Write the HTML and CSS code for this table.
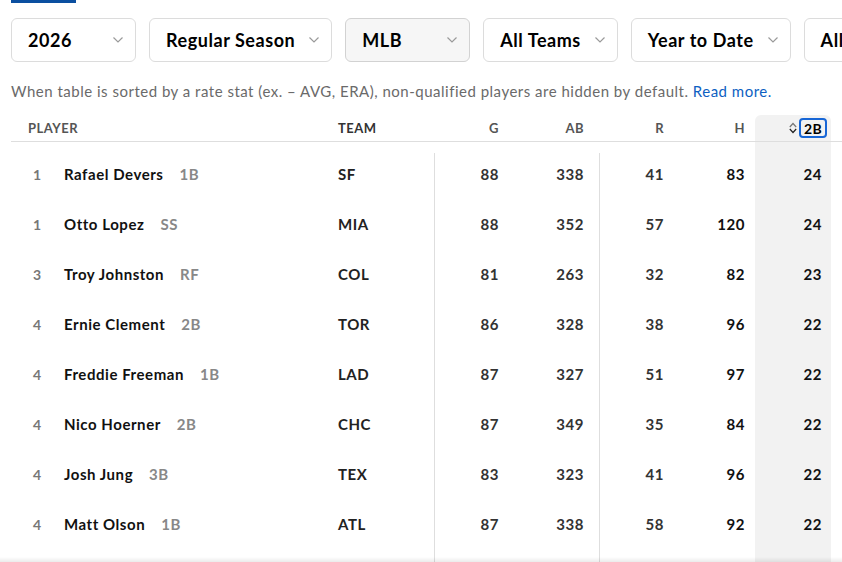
FILE: index.html
```html
<!DOCTYPE html>
<html lang="en">
<head>
<meta charset="utf-8">
<title>MLB Stats</title>
<link rel="stylesheet" href="styles.css">
</head>
<body>
<div class="page">
  <div class="tab-bar"></div>
  <div class="filters">
    <div class="filter"><span>2026</span><svg class="chev" viewBox="0 0 10 6"><path d="M0.5 0.5 L5 5 L9.5 0.5"/></svg></div>
    <div class="filter"><span>Regular Season</span><svg class="chev" viewBox="0 0 10 6"><path d="M0.5 0.5 L5 5 L9.5 0.5"/></svg></div>
    <div class="filter active"><span>MLB</span><svg class="chev" viewBox="0 0 10 6"><path d="M0.5 0.5 L5 5 L9.5 0.5"/></svg></div>
    <div class="filter"><span>All Teams</span><svg class="chev" viewBox="0 0 10 6"><path d="M0.5 0.5 L5 5 L9.5 0.5"/></svg></div>
    <div class="filter"><span>Year to Date</span><svg class="chev" viewBox="0 0 10 6"><path d="M0.5 0.5 L5 5 L9.5 0.5"/></svg></div>
    <div class="filter"><span>All Positions</span><svg class="chev" viewBox="0 0 10 6"><path d="M0.5 0.5 L5 5 L9.5 0.5"/></svg></div>
  </div>
  <p class="note">When table is sorted by a rate stat (ex. – AVG, ERA), non-qualified players are hidden by default. <a href="#">Read more.</a></p>

  <div class="table">
    <div class="thead">
      <div class="th c-player">Player</div>
      <div class="th c-team">Team</div>
      <div class="th c-g num">G</div>
      <div class="th c-ab num">AB</div>
      <div class="th c-r num">R</div>
      <div class="th c-h num">H</div>
      <div class="th c-2b num sorted">
        <svg class="sort" viewBox="0 0 8 14"><path class="up" d="M0.8 6 L4 2.5 L7.2 6"/><path class="down" d="M0.8 8 L4 11.5 L7.2 8"/></svg>
        <span class="focus">2B</span>
      </div>
      <div class="th c-rest"></div>
    </div>
    <div class="spacer">
      <div class="c-player"></div><div class="c-team"></div><div class="c-g"></div><div class="c-ab"></div><div class="c-r"></div><div class="c-h"></div><div class="c-2b"></div><div class="c-rest"></div>
    </div>

    <div class="row first">
      <div class="c-player"><span class="rank">1</span><span class="name">Rafael Devers</span><span class="pos">1B</span></div>
      <div class="c-team">SF</div>
      <div class="c-g num sep">88</div><div class="c-ab num">338</div><div class="c-r num sep">41</div><div class="c-h num dark">83</div><div class="c-2b num dark">24</div><div class="c-rest"></div>
    </div>
    <div class="row">
      <div class="c-player"><span class="rank">1</span><span class="name">Otto Lopez</span><span class="pos">SS</span></div>
      <div class="c-team">MIA</div>
      <div class="c-g num sep">88</div><div class="c-ab num">352</div><div class="c-r num sep">57</div><div class="c-h num dark">120</div><div class="c-2b num dark">24</div><div class="c-rest"></div>
    </div>
    <div class="row">
      <div class="c-player"><span class="rank">3</span><span class="name">Troy Johnston</span><span class="pos">RF</span></div>
      <div class="c-team">COL</div>
      <div class="c-g num sep">81</div><div class="c-ab num">263</div><div class="c-r num sep">32</div><div class="c-h num dark">82</div><div class="c-2b num dark">23</div><div class="c-rest"></div>
    </div>
    <div class="row">
      <div class="c-player"><span class="rank">4</span><span class="name">Ernie Clement</span><span class="pos">2B</span></div>
      <div class="c-team">TOR</div>
      <div class="c-g num sep">86</div><div class="c-ab num">328</div><div class="c-r num sep">38</div><div class="c-h num dark">96</div><div class="c-2b num dark">22</div><div class="c-rest"></div>
    </div>
    <div class="row">
      <div class="c-player"><span class="rank">4</span><span class="name">Freddie Freeman</span><span class="pos">1B</span></div>
      <div class="c-team">LAD</div>
      <div class="c-g num sep">87</div><div class="c-ab num">327</div><div class="c-r num sep">51</div><div class="c-h num dark">97</div><div class="c-2b num dark">22</div><div class="c-rest"></div>
    </div>
    <div class="row">
      <div class="c-player"><span class="rank">4</span><span class="name">Nico Hoerner</span><span class="pos">2B</span></div>
      <div class="c-team">CHC</div>
      <div class="c-g num sep">87</div><div class="c-ab num">349</div><div class="c-r num sep">35</div><div class="c-h num dark">84</div><div class="c-2b num dark">22</div><div class="c-rest"></div>
    </div>
    <div class="row">
      <div class="c-player"><span class="rank">4</span><span class="name">Josh Jung</span><span class="pos">3B</span></div>
      <div class="c-team">TEX</div>
      <div class="c-g num sep">83</div><div class="c-ab num">323</div><div class="c-r num sep">41</div><div class="c-h num dark">96</div><div class="c-2b num dark">22</div><div class="c-rest"></div>
    </div>
    <div class="row">
      <div class="c-player"><span class="rank">4</span><span class="name">Matt Olson</span><span class="pos">1B</span></div>
      <div class="c-team">ATL</div>
      <div class="c-g num sep">87</div><div class="c-ab num">338</div><div class="c-r num sep">58</div><div class="c-h num dark">92</div><div class="c-2b num dark">22</div><div class="c-rest"></div>
    </div>
    <div class="row filler">
      <div class="c-player"></div><div class="c-team"></div><div class="c-g sep"></div><div class="c-ab"></div><div class="c-r sep"></div><div class="c-h"></div><div class="c-2b"></div><div class="c-rest"></div>
    </div>
  </div>
</div>
<div class="bottom-shade"></div>
</body>
</html>
```

FILE: styles.css
```css
html, body {
  margin: 0;
  padding: 0;
  overflow: hidden;
  background: #fff;
}
body {
  font-family: "Lato", "Liberation Sans", sans-serif;
  color: #111;
  width: 842px;
  height: 562px;
}
.page {
  padding-left: 11px;
}
.tab-bar {
  width: 65px;
  height: 3px;
  background: #0b4fa0;
}
.filters {
  display: flex;
  gap: 13px;
  margin-top: 15px;
  white-space: nowrap;
}
.filter {
  flex: none;
  box-sizing: border-box;
  height: 44px;
  min-width: 125px;
  display: flex;
  align-items: center;
  justify-content: space-between;
  padding: 0 12px 0 16px;
  border: 1px solid #dcdcdc;
  border-radius: 6px;
  background: #fff;
  font-size: 18px;
  font-weight: 700;
  letter-spacing: 0.55px;
  color: #000;
}
.filter.active {
  background: #f6f6f6;
  border-color: #d2d2d2;
}
.chev {
  width: 10px;
  height: 6px;
  margin-left: 14px;
  fill: none;
  stroke: #9a9a9a;
  stroke-width: 1.2;
}
.note {
  margin: 19px 0 0;
  font-size: 15px;
  line-height: 20px;
  letter-spacing: 0.5px;
  color: #6a6a6a;
}
.note a {
  color: #0d5fc2;
  text-decoration: none;
}
.table {
  margin-top: 14px;
}
.thead, .row, .spacer {
  display: grid;
  grid-template-columns: 311px 112px 81px 84px 81px 75px 76px 1fr;
}
.thead {
  height: 26px;
  border-bottom: 1px solid #dedede;
  align-items: stretch;
}
.th {
  display: flex;
  align-items: center;
  font-size: 13px;
  font-weight: 700;
  letter-spacing: 0.5px;
  text-transform: uppercase;
  color: #555;
}
.th.c-player { padding-left: 17px; }
.th.num { justify-content: flex-end; }
.spacer { height: 7px; }
.row {
  height: 50px;
  align-items: stretch;
  font-size: 15px;
  font-weight: 700;
  letter-spacing: 0.55px;
}
.row > div {
  display: flex;
  align-items: center;
}
.row .num { justify-content: flex-end; color: #333; }
.row .num.dark { color: #111; }
.c-team { padding-left: 16px; color: #333; }
.row .c-team { color: #222; }
.c-g { padding-right: 16px; }
.c-ab { padding-right: 15px; }
.c-r { padding-right: 16px; }
.c-h { padding-right: 10px; }
.c-2b { padding-right: 9px; background: #f2f2f2; }
.th.c-2b {
  border-radius: 6px 6px 0 0;
  padding-right: 4px;
  color: #000;
}
.sep {
  border-left: 1px solid #dedede;
}
.row.first .sep {
  border-left: 1px solid transparent;
  background: linear-gradient(#dedede, #dedede) no-repeat;
  background-origin: border-box;
  background-clip: border-box;
  background-position: 0 4px;
  background-size: 1px 100%;
}
.rank {
  width: 31px;
  margin-left: 22px;
  font-size: 14px;
  color: #777;
}
.name {
  color: #111;
}
.pos {
  margin-left: 16px;
  color: #888;
}
.row .c-player { padding-left: 0; }
.sort {
  width: 8px;
  height: 14px;
  margin-right: 2px;
  fill: none;
  stroke-width: 1.2;
}
.sort .up { stroke: #777; }
.sort .down { stroke: #222; }
.focus {
  box-sizing: border-box;
  height: 20px;
  padding: 0 3px;
  display: inline-flex;
  align-items: center;
  border: 2px solid #1766d6;
  border-radius: 4px;
  font-size: 14px;
  letter-spacing: 0.3px;
  color: #000;
}
.filler { height: 40px; }
.bottom-shade {
  position: fixed;
  left: 0;
  right: 0;
  bottom: 0;
  height: 5px;
  background: linear-gradient(rgba(0,0,0,0), rgba(0,0,0,0.08));
}
```
